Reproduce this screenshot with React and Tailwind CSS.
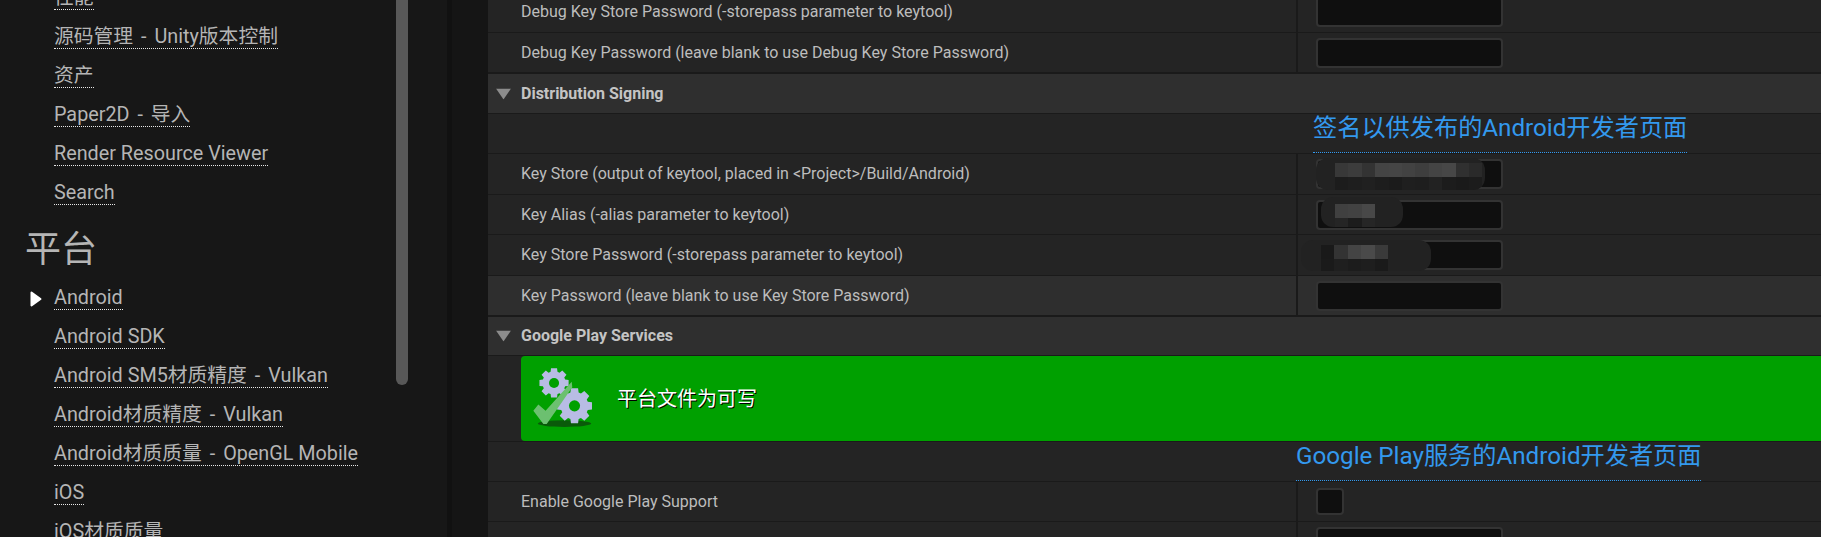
import React from 'react';

const cjk = '[font-family:Roboto,"Noto_Sans_CJK_SC",sans-serif]';

const Gear = ({ cx, cy, r, hole }) => {
  // gear outline, 8 teeth
  const pts = [];
  for (let i = 0; i < 8; i++) {
    const a = (i / 8) * Math.PI * 2;
    const w = 0.2;
    [[r * 0.78, -w * 1.5], [r, -w], [r, w], [r * 0.78, w * 1.5]].forEach(([d, o]) => {
      pts.push(`${(cx + Math.cos(a + o) * d).toFixed(1)},${(cy + Math.sin(a + o) * d).toFixed(1)}`);
    });
  }
  return (
    <g>
      <polygon points={pts.join(' ')} fill="#b8bce4" />
      <circle cx={cx} cy={cy} r={hole} fill="#00a000" />
    </g>
  );
};

const GearCheck = () => (
  <svg width="67" height="69" viewBox="0 0 60 62" className="shrink-0">
    <ellipse cx="30" cy="53.5" rx="24" ry="3" fill="#0a5a0a" />
    <Gear cx={20.6} cy={17} r={13.4} hole={4.5} />
    <Gear cx={39} cy={37.6} r={16} hole={5} />
    <path d="M2 42 L6.5 36.5 L13 42 L36.5 16 L37 21 L14 54 L11 54 Z" fill="#6cc070" />
  </svg>
);

const Caret = () => (
  <svg width="15" height="11" viewBox="0 0 15 11" className="absolute left-[8px] top-1/2 -translate-y-1/2">
    <path d="M0 0 H15 L7.5 11 Z" fill="#8c8c8c" />
  </svg>
);

const Field = () => (
  <div className="h-[30px] w-[187px] rounded-[4px] border-2 border-[#333333] bg-[#0f0f0f]" />
);

// pixelated smudge hiding the store values
const Mosaic = ({ cells, low, className }) => (
  <div className={`absolute flex flex-col overflow-hidden rounded-[12px] bg-[#222222] ${className}`}>
    <div className="flex h-[14px] shrink-0">
      {cells.map((c, i) => (
        <div key={i} className="h-full w-[13.4px] shrink-0" style={{ backgroundColor: c }} />
      ))}
    </div>
    <div className="flex h-[13px] shrink-0">
      {low.map((c, i) => (
        <div key={i} className="h-full w-[13.4px] shrink-0" style={{ backgroundColor: c }} />
      ))}
    </div>
  </div>
);

const PropRow = ({ label, h, hover, thick, children, mosaic }) => (
  <div
    className={`relative flex shrink-0 items-center border-b-[#1a1a1a] ${thick ? 'border-b-2' : 'border-b'} ${h} ${hover ? 'bg-[#2e2e2e]' : 'bg-[#242424]'}`}
  >
    <div className="flex h-full w-[810px] shrink-0 items-center border-r-2 border-r-[#1a1a1a] pl-[33px] text-[16px] text-[#bdbdbd]">
      {label}
    </div>
    <div className="pl-[18px]">{children}</div>
    {mosaic}
  </div>
);

const Header = ({ label, h, thick }) => (
  <div className={`relative flex shrink-0 items-center border-b-[#1a1a1a] bg-[#2f2f2f] pl-[33px] text-[16px] font-bold text-[#c4c4c4] ${thick ? 'border-b-2' : 'border-b'} ${h}`}>
    <Caret />
    {label}
  </div>
);

const LinkRow = ({ label, h, offset }) => (
  <div className={`flex shrink-0 border-b border-b-[#1a1a1a] bg-[#242424] ${h}`}>
    <span className={`block h-[39px] border-b border-dotted border-b-[#3399ee] text-[24.2px] leading-[29px] text-[#3399ee] ${offset}`}>
      {label}
    </span>
  </div>
);

const NavItem = ({ label, active }) => {
  // the " - " in these titles sits wider than a plain space run
  const [head, tail] = label.split(' - ');
  return (
    <div className="relative flex h-[39px] items-end pl-[54px]">
      {active && (
        <svg width="12" height="16" viewBox="0 0 12 16" className="absolute left-[30px] top-[20px]">
          <path d="M1.5 1.5 L10.5 8 L1.5 14.5 Z" fill="#ffffff" stroke="#ffffff" strokeWidth="2" strokeLinejoin="round" />
        </svg>
      )}
      <span className="border-b border-dotted border-b-[#e8e8e8] text-[19.8px] leading-[22px] text-[#b5b5b5]">
        {head}
        {tail && <span className="px-[3px]"> - </span>}
        {tail}
      </span>
    </div>
  );
};

const topNav = ['性能', '源码管理 - Unity版本控制', '资产', 'Paper2D - 导入', 'Render Resource Viewer', 'Search'];
const platformNav = [
  'Android',
  'Android SDK',
  'Android SM5材质精度 - Vulkan',
  'Android材质精度 - Vulkan',
  'Android材质质量 - OpenGL Mobile',
  'iOS',
  'iOS材质质量',
];

export default function App() {
  return (
    <div className={`flex h-[537px] w-[1821px] overflow-hidden bg-[#151515] ${cjk}`}>
      {/* docs sidebar */}
      <aside className="relative h-full w-[447px] shrink-0 overflow-hidden bg-[#171717]">
        <div className="-mt-[29px]">
          {topNav.map((t) => (
            <NavItem key={t} label={t} />
          ))}
          <div className="h-[66px] pl-[25px] pt-[25px] text-[36px] leading-[40px] text-[#b5b5b5]">平台</div>
          {platformNav.map((t, i) => (
            <NavItem key={t} label={t} active={i === 0} />
          ))}
        </div>
        <div className="absolute left-[396px] top-0 h-[385px] w-[12px] rounded-b-[6px] bg-[#585858]" />
      </aside>

      <div className="h-full w-[5px] shrink-0 bg-[#111111]" />
      <div className="h-full w-[36px] shrink-0 bg-[#151515]" />

      {/* project settings panel */}
      <main className="flex h-full min-w-0 flex-1 flex-col overflow-hidden">
        <div className="-mt-[8px] flex flex-col">
          <PropRow label="Debug Key Store Password (-storepass parameter to keytool)" h="h-[41px]">
            <Field />
          </PropRow>
          <PropRow label="Debug Key Password (leave blank to use Debug Key Store Password)" h="h-[41px]" thick>
            <Field />
          </PropRow>
          <Header label="Distribution Signing" h="h-[40px]" />
          <LinkRow label="签名以供发布的Android开发者页面" h="h-[40px]" offset="ml-[825px]" />
          <PropRow
            label="Key Store (output of keytool, placed in <Project>/Build/Android)"
            h="h-[41px]"
            mosaic={
              <Mosaic
                className="left-[828px] top-[4px] h-[32px] w-[169px] pl-[19px] pt-[5px]"
                cells={['#383838', '#3c3c3c', '#333333', '#444444', '#454545', '#424242', '#3e3e3e', '#444444', '#474747', '#303030', '#2a2a2a']}
                low={['#1c1c1c', '#1e1e1e', '#202020', '#1d1d1d', '#1b1b1b', '#1f1f1f', '#1e1e1e', '#222222', '#1c1c1c', '#1a1a1a', '#1c1c1c']}
              />
            }
          >
            <Field />
          </PropRow>
          <PropRow
            label="Key Alias (-alias parameter to keytool)"
            h="h-[40px]"
            mosaic={
              <Mosaic
                className="left-[833px] top-[2px] h-[30px] w-[82px] pl-[14px] pt-[7px]"
                cells={['#404040', '#424242', '#484848']}
                low={['#252525', '#1c1c1c', '#262626']}
              />
            }
          >
            <Field />
          </PropRow>
          <PropRow
            label="Key Store Password (-storepass parameter to keytool)"
            h="h-[41px]"
            mosaic={
              <Mosaic
                className="left-[813px] top-[5px] h-[31px] w-[130px] pl-[20px] pt-[5px]"
                cells={['#191919', '#333333', '#444444', '#4a4a4a', '#3a3a3a']}
                low={['#1a1a1a', '#1f1f1f', '#1c1c1c', '#1e1e1e', '#1a1a1a']}
              />
            }
          >
            <Field />
          </PropRow>
          <PropRow label="Key Password (leave blank to use Key Store Password)" h="h-[41px]" hover thick>
            <Field />
          </PropRow>
          <Header label="Google Play Services" h="h-[39px]" />
          <div className="flex h-[86px] shrink-0 border-b border-b-[#1a1a1a] bg-[#242424] pl-[33px]">
            <div className="flex h-full flex-1 items-center rounded-l-[4px] bg-[#00a000] pl-[10px]">
              <GearCheck />
              <span className="ml-[19px] text-[20px] text-white [text-shadow:1px_1px_0_#000]">平台文件为可写</span>
            </div>
          </div>
          <LinkRow label="Google Play服务的Android开发者页面" h="h-[40px]" offset="ml-[808px]" />
          <PropRow label="Enable Google Play Support" h="h-[40px]">
            <div className="h-[27px] w-[28px] rounded-[4px] border-2 border-[#333333] bg-[#0f0f0f]" />
          </PropRow>
          <PropRow label="" h="h-[41px]">
            <Field />
          </PropRow>
        </div>
      </main>
    </div>
  );
}
